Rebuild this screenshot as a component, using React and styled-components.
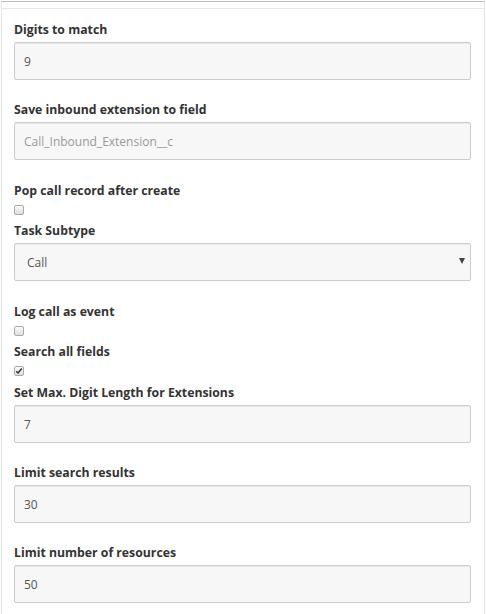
import React, { useState } from 'react';
import styled, { createGlobalStyle } from 'styled-components';

const GlobalStyle = createGlobalStyle`
  body {
    margin: 0;
    background: #fff;
    font-family: "Open Sans", "Liberation Sans", Arial, sans-serif;
  }
`;

const Panel = styled.div`
  margin: 1px 0 0 1px;
  width: 482px;
  border-top: 1px solid #bdbdbd;
  border-left: 1px solid #e3e3e3;
  border-right: 1px solid #e3e3e3;
  padding-top: 6px;
  min-height: 620px;
`;

const Divider = styled.div`
  border-top: 1px solid #e6e6e6;
`;

const Form = styled.form`
  padding: 12px 13px 0 12px;
`;

const Field = styled.div`
  margin-bottom: ${p => p.$gap ?? 21}px;
`;

const Label = styled.label`
  display: block;
  font-size: 12.25px;
  font-weight: 700;
  line-height: 18px;
  color: #333;
  margin-bottom: 3px;
`;

const Input = styled.input`
  display: block;
  box-sizing: border-box;
  width: 100%;
  height: 38px;
  padding: 0 9px;
  border: 1px solid #ccc;
  border-radius: 2px;
  background: #f7f7f7;
  box-shadow: inset 0 1px 1px rgba(0, 0, 0, 0.06);
  font-family: inherit;
  font-size: 12px;
  color: ${p => (p.disabled ? '#9a9a9a' : '#555')};
  outline: none;
`;

const SelectWrap = styled.div`
  position: relative;
`;

const Select = styled.select`
  display: block;
  box-sizing: border-box;
  width: 100%;
  height: 38px;
  padding: 0 12px;
  border: 1px solid #ccc;
  border-radius: 2px;
  background: #f7f7f7;
  box-shadow: inset 0 1px 1px rgba(0, 0, 0, 0.06);
  font-family: inherit;
  font-size: 12px;
  color: #555;
  appearance: none;
  outline: none;
`;

const Arrow = styled.span`
  position: absolute;
  right: 6px;
  top: 15px;
  width: 0;
  height: 0;
  border-left: 3px solid transparent;
  border-right: 3px solid transparent;
  border-top: 6px solid #444;
  pointer-events: none;
`;

const CheckRow = styled.div`
  height: 19px;
  padding-top: 2px;
  box-sizing: border-box;
`;

const Box = styled.span`
  display: flex;
  align-items: center;
  justify-content: center;
  box-sizing: border-box;
  width: 10px;
  height: 10px;
  border: 1px solid #a9a9a9;
  border-radius: 2px;
  background: linear-gradient(#fcfcfc, #dedede);
  cursor: pointer;

  svg {
    display: block;
  }
`;

const Check = ({ checked, onToggle }) => (
  <CheckRow>
    <Box onClick={onToggle}>
      {checked && (
        <svg width="8" height="8" viewBox="0 0 8 8">
          <path d="M1.2 4.2 L3 6 L6.8 1.4" fill="none" stroke="#333" strokeWidth="1.5" />
        </svg>
      )}
    </Box>
  </CheckRow>
);

const App = () => {
  const [popCall, setPopCall] = useState(false);
  const [logEvent, setLogEvent] = useState(false);
  const [searchAll, setSearchAll] = useState(true);

  return (
    <>
      <GlobalStyle />
      <Panel>
        <Divider />
        <Form onSubmit={e => e.preventDefault()}>
          <Field>
            <Label>Digits to match</Label>
            <Input defaultValue="9" />
          </Field>
          <Field $gap={22}>
            <Label>Save inbound extension to field</Label>
            <Input disabled defaultValue="Call_Inbound_Extension__c" />
          </Field>
          <Field $gap={0}>
            <Label>Pop call record after create</Label>
            <Check checked={popCall} onToggle={() => setPopCall(!popCall)} />
          </Field>
          <Field $gap={22}>
            <Label>Task Subtype</Label>
            <SelectWrap>
              <Select defaultValue="Call">
                <option>Call</option>
                <option>Email</option>
                <option>Task</option>
              </Select>
              <Arrow />
            </SelectWrap>
          </Field>
          <Field $gap={0}>
            <Label>Log call as event</Label>
            <Check checked={logEvent} onToggle={() => setLogEvent(!logEvent)} />
          </Field>
          <Field $gap={1}>
            <Label>Search all fields</Label>
            <Check checked={searchAll} onToggle={() => setSearchAll(!searchAll)} />
          </Field>
          <Field>
            <Label>Set Max. Digit Length for Extensions</Label>
            <Input defaultValue="7" />
          </Field>
          <Field>
            <Label>Limit search results</Label>
            <Input defaultValue="30" />
          </Field>
          <Field>
            <Label>Limit number of resources</Label>
            <Input defaultValue="50" />
          </Field>
        </Form>
      </Panel>
    </>
  );
};

export default App;
